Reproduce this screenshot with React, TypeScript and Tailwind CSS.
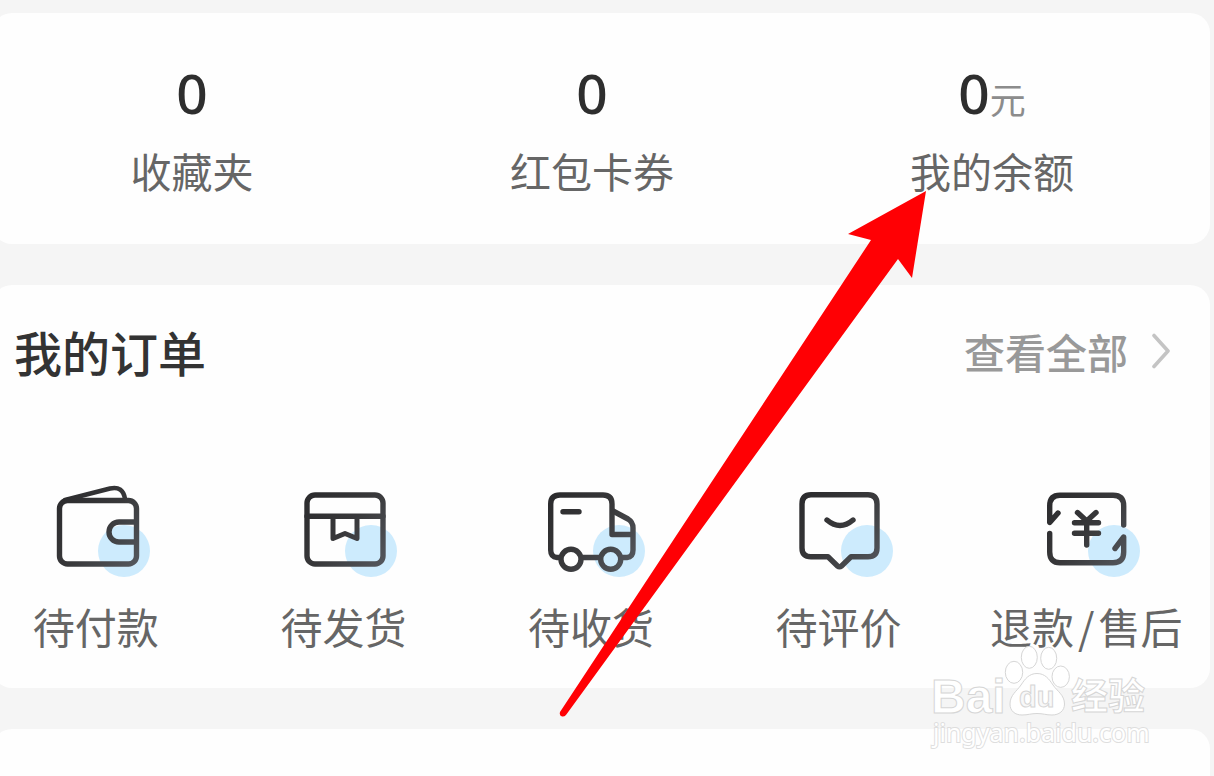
import type { ReactNode } from "react";

const stats = [
  { label: "收藏夹", value: 0 },
  { label: "红包卡券", value: 0 },
  { label: "我的余额", value: 0, unit: "元" },
];

function IconFrame({ id, children }: { id: string; children: ReactNode }) {
  return (
    <svg
      viewBox="0 0 110 100"
      className="h-[100px] w-[110px]"
      fill="none"
      stroke={`url(#${id})`}
      strokeWidth="5.4"
      strokeLinecap="round"
      strokeLinejoin="round"
      aria-hidden="true"
    >
      <defs>
        <linearGradient
          id={id}
          gradientUnits="userSpaceOnUse"
          x1="15"
          y1="15"
          x2="98"
          y2="85"
        >
          <stop offset="0" stopColor="#2b2b2d" />
          <stop offset="0.5" stopColor="#38383a" />
          <stop offset="1" stopColor="#55585e" />
        </linearGradient>
      </defs>
      <circle cx="83" cy="71" r="26" fill="#cdebfd" stroke="none" />
      {children}
    </svg>
  );
}

function WalletIcon() {
  return (
    <IconFrame id="wallet">
      <rect x="18.5" y="20.5" width="77" height="63.5" rx="8" />
      <path d="M24 20 L69 8.5 Q82 5.5 84 19" strokeWidth="4.6" />
      <path d="M95 42 H78 a10 10 0 0 0 0 20 H95" strokeLinecap="butt" />
    </IconFrame>
  );
}

function BoxIcon() {
  return (
    <IconFrame id="box">
      <rect x="19" y="15" width="76" height="69" rx="8" />
      <path d="M19 36.2 L95 36.3" />
      <path d="M45 37 V58.5 L57 53.5 L69 58.5 V37" strokeWidth="5" />
    </IconFrame>
  );
}

function TruckIcon() {
  return (
    <IconFrame id="truck">
      <path d="M24 77.5 H21 Q14.7 77 14.7 70 V24 Q14.7 15 24 15 H67 Q76 15 76 24 V54.5 H96" />
      <path d="M77 31 L92 39 Q97 42 97 48 V70 Q97 77 91 77.5 H86" />
      <path d="M46 77.5 H64 M27 31.7 H43" />
      <circle cx="35" cy="79.3" r="10" />
      <circle cx="74.7" cy="79.3" r="10" />
    </IconFrame>
  );
}

function ReviewIcon() {
  return (
    <IconFrame id="review">
      <path d="M27 14.8 H84 Q93 14.8 93 24 V68 Q93 76.7 84 76.7 H67 L57.5 86 Q55.5 87.5 53.5 86 L44 76.7 H27 Q18 76.7 18 68 V24 Q18 14.8 27 14.8 Z" />
      <path d="M43 40 Q56 51 69 40" />
    </IconFrame>
  );
}

function RefundIcon() {
  return (
    <IconFrame id="refund">
      <path d="M27 33 L18.7 42.5 V26 Q18.7 15.3 29 15.3 H82 Q92.7 15.3 92.7 26 V45" />
      <path d="M84 68.5 L92.7 57 V72 Q92.7 82.7 82 82.7 H29 Q18.7 82.7 18.7 72 V53.5" />
      <path d="M46.5 32.5 L55.7 41 L65 32.5 M43.5 42.7 H67.5 M43.5 53.3 H67.5 M55.7 42 V65" />
    </IconFrame>
  );
}

const orders: { label: ReactNode; icon: ReactNode }[] = [
  { label: "待付款", icon: <WalletIcon /> },
  { label: "待发货", icon: <BoxIcon /> },
  { label: "待收货", icon: <TruckIcon /> },
  { label: "待评价", icon: <ReviewIcon /> },
  {
    label: (
      <>
        退款<span className="px-1">/</span>售后
      </>
    ),
    icon: <RefundIcon />,
  },
];

function Watermark() {
  return (
    <svg
      viewBox="0 0 230 115"
      className="pointer-events-none absolute top-[640px] left-[925px] h-[115px] w-[230px] font-['Liberation_Sans','Noto_Sans_CJK_SC',sans-serif]"
      fill="#ffffff"
      stroke="#d6d6d6"
      strokeWidth="1"
    >
      <text x="6" y="73" fontSize="48" fontWeight="700">
        Bai
      </text>
      <path d="M112 33.5 C120 33.5 124 39 128 45 C132 51 139.500 55 139.500 64 C139.500 71 134 75 127 75 C121 75 118 73.500 112 73.500 C106 73.500 103 75 97 75 C90 75 85 71 85 64 C85 55 92 51 96 45 C100 39 104 33.500 112 33.500 Z" />
      <ellipse cx="89" cy="32.3" rx="8.700" ry="11" />
      <ellipse cx="104.3" cy="17.300" rx="8" ry="11" />
      <ellipse cx="123.7" cy="18.300" rx="8" ry="11" />
      <ellipse cx="135.7" cy="36.700" rx="8.700" ry="10.700" />
      <text x="94" y="67" fontSize="29" fontWeight="700" fill="#f8f8f8">
        du
      </text>
      <text x="146" y="70" fontSize="37" fontWeight="700">
        经验
      </text>
      <text
        x="8"
        y="102"
        fontSize="25"
        strokeWidth="2"
        stroke="#dedede"
        paintOrder="stroke"
        className="font-['Noto_Sans',sans-serif]"
      >
        jingyan.baidu.com
      </text>
    </svg>
  );
}

export default function App() {
  return (
    <div className="relative min-h-screen overflow-hidden bg-[#f5f5f5] font-['Noto_Sans_CJK_SC',sans-serif] text-[#666]">
      <main className="-ml-2 mr-1 flex min-h-screen flex-col gap-[41px] pt-[13px]">
        <section className="grid grid-cols-3 rounded-[20px] bg-[#fefefe] pt-[52px] pr-[18px] pb-[50px]">
          {stats.map((stat) => (
            <a
              key={stat.label}
              href="#"
              className="flex flex-col items-center gap-[25px]"
            >
              <span className="flex h-14 items-baseline text-[55px] leading-[56px] font-medium text-[#2e2e2e]">
                <span className="font-['Noto_Sans',sans-serif]">
                  {stat.value}
                </span>
                {stat.unit && (
                  <span className="text-[36px] leading-none font-normal text-[#8c8c8c]">
                    {stat.unit}
                  </span>
                )}
              </span>
              <span className="text-[41px] leading-[48px]">{stat.label}</span>
            </a>
          ))}
        </section>

        <section className="rounded-[20px] bg-[#fefefe] pt-[38px] pb-[34px]">
          <header className="flex items-center justify-between pr-10 pl-[22px]">
            <h2 className="text-[48px] leading-[56px] font-medium text-[#333]">
              我的订单
            </h2>
            <a
              href="#"
              className="flex items-center gap-6 text-[41px] leading-[56px] font-medium text-[#999]"
            >
              查看全部
              <svg
                viewBox="0 0 18 36"
                className="h-9 w-[18px]"
                fill="none"
                stroke="#c4c4c4"
                strokeWidth="3.6"
                strokeLinecap="round"
                strokeLinejoin="round"
                aria-hidden="true"
              >
                <path d="M2 2.500 L16 18 L2 33.500" />
              </svg>
            </a>
          </header>

          <nav className="mt-[101px] -ml-5 grid grid-cols-5">
            {orders.map((order, index) => (
              <a
                key={index}
                href="#"
                className="flex flex-col items-center gap-[18px] text-[42px] leading-[56px] whitespace-nowrap"
              >
                {order.icon}
                <span>{order.label}</span>
              </a>
            ))}
          </nav>
        </section>

        <section className="flex-1 rounded-t-[20px] bg-[#fefefe]" />
      </main>

      <Watermark />

      {/* pointer to the balance entry */}
      <svg
        viewBox="0 0 370 528"
        className="pointer-events-none absolute top-[190px] left-[558px] h-[528px] w-[370px]"
        fill="#ff0004"
        aria-hidden="true"
      >
        <path d="M368 1 L290 44 L313 50 L2 522 Q1 526 4 526.500 Q6 527 8 525 L340 69 L354 88 Z" />
      </svg>
    </div>
  );
}
